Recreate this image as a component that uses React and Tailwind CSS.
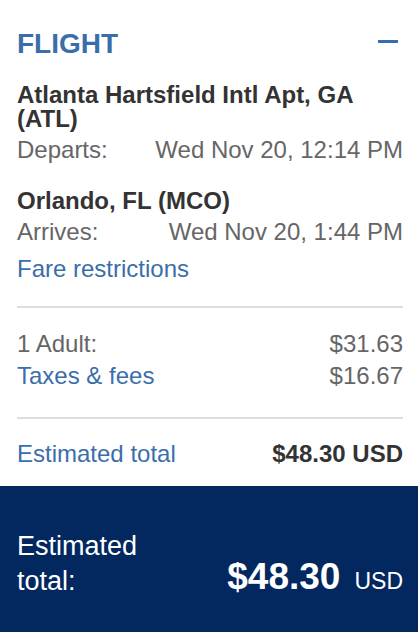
export default function App() {
  const font = { fontFamily: '"Liberation Sans", Arial, sans-serif' }
  return (
    <div className="w-[418px] h-[632px] bg-white flex flex-col overflow-hidden" style={font}>
      <div className="flex-1 pl-[17px] pr-[15px] pt-[28px]">
        <div className="flex items-center justify-between h-[32px]">
          <h2 className="text-[28px] leading-[32px] font-bold text-[#3a6eaa]">FLIGHT</h2>
          <button className="w-[20px] h-[3px] bg-[#3a6eaa] mr-[5px] mt-[-5px]" aria-label="Collapse" />
        </div>

        <div className="mt-[23px] text-[24px]">
          <div className="font-bold text-[#333] leading-[24px]">Atlanta Hartsfield Intl Apt, GA (ATL)</div>
          <div className="flex justify-between text-[#666] leading-[31px] mt-[3px]">
            <span>Departs:</span>
            <span>Wed Nov 20, 12:14 PM</span>
          </div>

          <div className="font-bold text-[#333] leading-[24px] mt-[24px]">Orlando, FL (MCO)</div>
          <div className="flex justify-between text-[#666] leading-[31px] mt-[3px]">
            <span>Arrives:</span>
            <span>Wed Nov 20, 1:44 PM</span>
          </div>
          <a className="block text-[#3a6eaa] leading-[31px] mt-[6px]" href="#">Fare restrictions</a>

          <div className="h-[2px] bg-[#dddddd] mt-[22px]" />

          <div className="mt-[20px] leading-[32px]">
            <div className="flex justify-between text-[#666]">
              <span>1 Adult:</span>
              <span>$31.63</span>
            </div>
            <div className="flex justify-between">
              <a className="text-[#3a6eaa]" href="#">Taxes &amp; fees</a>
              <span className="text-[#666]">$16.67</span>
            </div>
          </div>

          <div className="h-[2px] bg-[#dddddd] mt-[25px]" />

          <div className="flex justify-between leading-[32px] mt-[19px]">
            <span className="text-[#3a6eaa]">Estimated total</span>
            <span className="font-bold text-[#333]">$48.30 USD</span>
          </div>
        </div>
      </div>

      <div className="h-[146px] bg-[#03285f] text-white pl-[17px] pr-[15px] pt-[43px] flex justify-between items-start">
        <div className="text-[27px] leading-[35px]">
          Estimated
          <br />
          total:
        </div>
        <div className="flex items-baseline gap-[14px] mt-[27px]">
          <span className="text-[37px] leading-[42px] font-bold">$48.30</span>
          <span className="text-[23px] leading-[42px]">USD</span>
        </div>
      </div>
    </div>
  )
}
